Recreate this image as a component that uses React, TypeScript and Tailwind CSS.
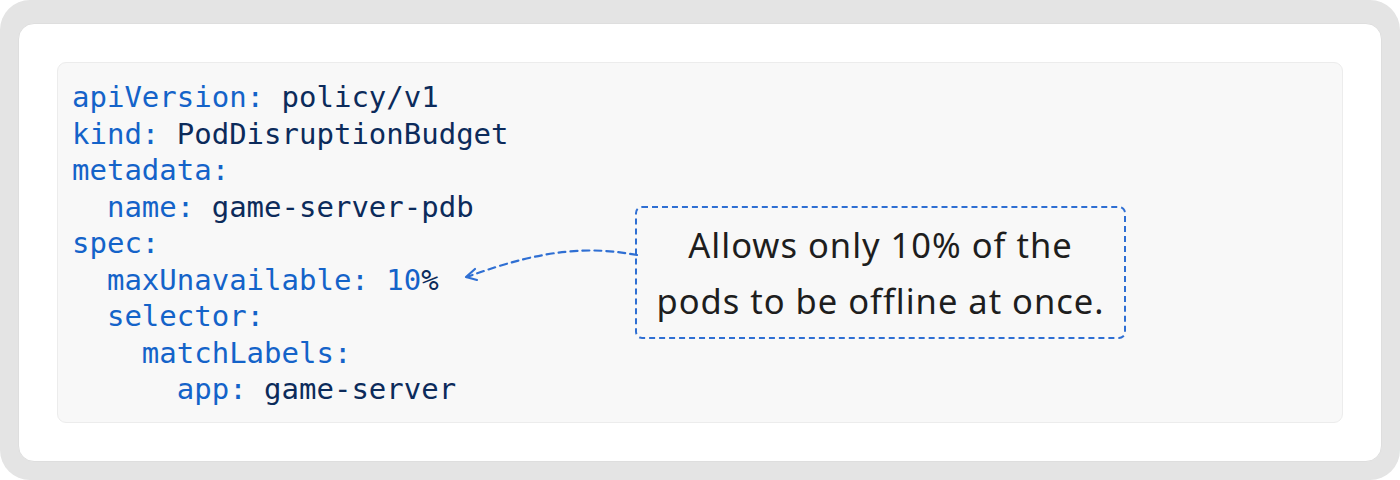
import React from 'react';

type Line = { indent: number; key: string; value?: string };

const lines: Line[] = [
  { indent: 0, key: 'apiVersion', value: 'policy/v1' },
  { indent: 0, key: 'kind', value: 'PodDisruptionBudget' },
  { indent: 0, key: 'metadata' },
  { indent: 1, key: 'name', value: 'game-server-pdb' },
  { indent: 0, key: 'spec' },
  { indent: 1, key: 'maxUnavailable', value: '10%' },
  { indent: 1, key: 'selector' },
  { indent: 2, key: 'matchLabels' },
  { indent: 3, key: 'app', value: 'game-server' },
];

const CodeLine = ({ line }: { line: Line }) => {
  const pad = '  '.repeat(line.indent);
  const isNumber = line.value === '10%';
  return (
    <div className="whitespace-pre">
      <span>{pad}</span>
      <span className="text-[#1463c9]">{line.key}:</span>
      {line.value && (
        <>
          <span> </span>
          {isNumber ? (
            <>
              <span className="text-[#1463c9]">10</span>
              <span className="text-[#0c2b5b]">%</span>
            </>
          ) : (
            <span className="text-[#0c2b5b]">{line.value}</span>
          )}
        </>
      )}
    </div>
  );
};

const App: React.FC = () => {
  return (
    <div className="w-[1400px] h-[480px] bg-white">
      <div className="w-full h-full bg-[#e4e4e4] rounded-[30px] pt-[23px] px-[18px] pb-[18px]">
        <div className="w-full h-full bg-white rounded-[16px] border border-[#dedede] p-[38px]">
          <div className="relative w-full h-full bg-[#f8f8f8] border border-[#ececec] rounded-[9px] pl-[14px] pt-[16px]">
            <div
              className="text-[29px] leading-[36.5px] text-[#0c2b5b]"
              style={{ fontFamily: '"DejaVu Sans Mono", "Liberation Mono", monospace' }}
            >
              {lines.map((line, i) => (
                <CodeLine key={i} line={line} />
              ))}
            </div>

            {/* dashed arrow from the note to the 10% value */}
            <svg
              className="absolute left-0 top-0 pointer-events-none"
              width="1288"
              height="361"
              viewBox="0 0 1288 361"
              fill="none"
            >
              <path
                d="M579 192 C 535 184, 490 184, 409 214"
                stroke="#2f6fd3"
                strokeWidth="2.2"
                strokeDasharray="7 5"
                strokeLinecap="round"
              />
              <path
                d="M417 206 L408 214 L419 217"
                stroke="#2f6fd3"
                strokeWidth="2.2"
                strokeLinecap="round"
                strokeLinejoin="round"
              />
            </svg>

            {/* note */}
            <div className="absolute left-[577px] top-[143px] w-[491px] h-[133px] border-2 border-dashed border-[#2f6fd3] rounded-[7px] flex items-center justify-center">
              <p
                className="text-center text-[34.5px] leading-[56px] text-[#1e1e1e] tracking-[1px]"
                style={{ fontFamily: '"Noto Sans", "Open Sans", sans-serif' }}
              >
                Allows only 10% of the
                <br />
                pods to be offline at once.
              </p>
            </div>
          </div>
        </div>
      </div>
    </div>
  );
};

export default App;
